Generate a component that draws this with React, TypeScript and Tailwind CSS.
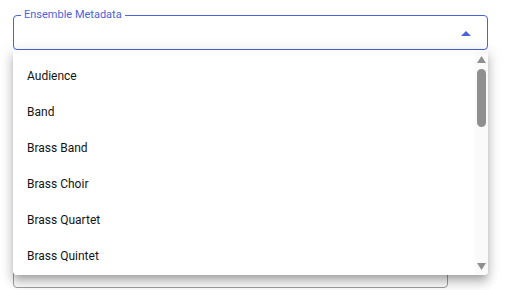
import React from "react";

const items = ["Audience", "Band", "Brass Band", "Brass Choir", "Brass Quartet", "Brass Quintet"];

export default function App() {
  return (
    <div
      className="relative w-[506px] h-[290px] bg-white overflow-hidden"
      style={{ fontFamily: "Roboto, 'Liberation Sans', sans-serif" }}
    >
      <div className="pl-[13px] pt-[15px]">
        {/* Focused field */}
        <div className="relative w-[475px] h-[35px] rounded-[4px] border border-[#4a63d8]">
          <div className="absolute -top-[8px] left-[7px] px-[3px] bg-white text-[11px] leading-[14px] text-[#4a63d8]">
            Ensemble Metadata
          </div>
          <svg className="absolute right-[16px] top-[15px]" width="10" height="5" viewBox="0 0 10 5">
            <path d="M0 5 L5 0 L10 5 Z" fill="#4a63d8" />
          </svg>
        </div>
        {/* Field behind menu */}
        <div className="mt-[202px] w-[435px] h-[36px] rounded-[4px] border border-[#9e9e9e]" />
      </div>

      {/* Dropdown menu */}
      <div className="absolute left-[13px] top-[50px] w-[475px] h-[225px] bg-white rounded-b-[4px] shadow-[0_5px_6px_-3px_rgba(0,0,0,0.2),0_8px_10px_1px_rgba(0,0,0,0.14),0_3px_14px_2px_rgba(0,0,0,0.12)] flex overflow-hidden">
        <div className="flex-1 pt-[8px]">
          {items.map((t) => (
            <div key={t} className="h-[36px] flex items-center pl-[14px] text-[12px] text-[#141414]">
              {t}
            </div>
          ))}
        </div>
        <div className="w-[13px] bg-[#fafafa] flex flex-col items-center">
          <svg className="mt-[6px]" width="9" height="7" viewBox="0 0 9 7">
            <path d="M0 7 L4.5 0 L9 7 Z" fill="#8f8f8f" />
          </svg>
          <div className="mt-[6px] w-[9px] h-[58px] rounded-full bg-[#8f8f8f]" />
          <div className="flex-1" />
          <svg className="mb-[5px]" width="9" height="7" viewBox="0 0 9 7">
            <path d="M0 0 L4.5 7 L9 0 Z" fill="#8f8f8f" />
          </svg>
        </div>
      </div>
    </div>
  );
}
